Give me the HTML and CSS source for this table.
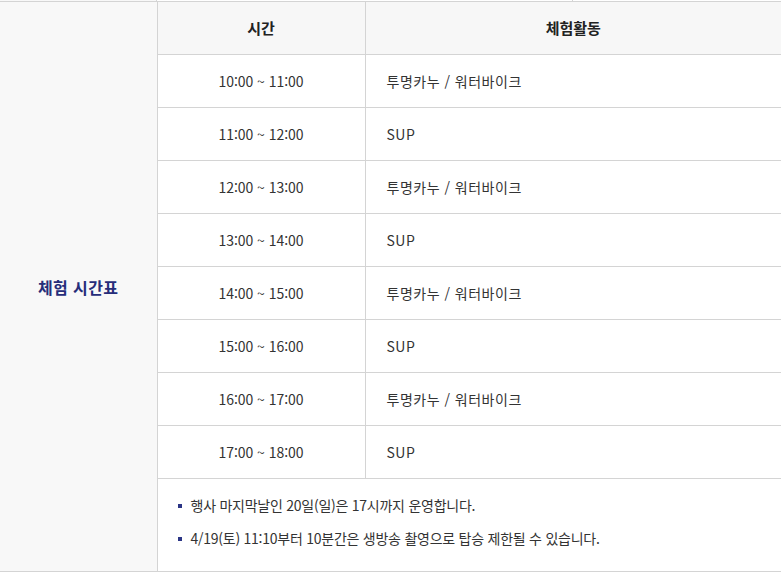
FILE: index.html
```html
<!DOCTYPE html>
<html lang="ko">
<head>
<meta charset="utf-8">
<title>체험 시간표</title>
<link rel="stylesheet" href="styles.css">
</head>
<body>
<div class="prev">
  <div class="prev-a"></div>
  <div class="prev-b"></div>
  <div class="prev-c"></div>
</div>
<table class="schedule">
  <colgroup>
    <col class="c1">
    <col class="c2">
    <col class="c3">
  </colgroup>
  <tbody>
    <tr class="head">
      <th class="label" rowspan="10">체험 시간표</th>
      <th>시간</th>
      <th>체험활동</th>
    </tr>
    <tr><td class="time">10:00 ~ 11:00</td><td class="act">투명카누 / 워터바이크</td></tr>
    <tr><td class="time">11:00 ~ 12:00</td><td class="act">SUP</td></tr>
    <tr><td class="time">12:00 ~ 13:00</td><td class="act">투명카누 / 워터바이크</td></tr>
    <tr><td class="time">13:00 ~ 14:00</td><td class="act">SUP</td></tr>
    <tr><td class="time">14:00 ~ 15:00</td><td class="act">투명카누 / 워터바이크</td></tr>
    <tr><td class="time">15:00 ~ 16:00</td><td class="act">SUP</td></tr>
    <tr><td class="time">16:00 ~ 17:00</td><td class="act">투명카누 / 워터바이크</td></tr>
    <tr><td class="time">17:00 ~ 18:00</td><td class="act">SUP</td></tr>
    <tr class="notes-row">
      <td colspan="2" class="notes">
        <ul>
          <li>행사 마지막날인 20일(일)은 17시까지 운영합니다.</li>
          <li>4/19(토) 11:10부터 10분간은 생방송 촬영으로 탑승 제한될 수 있습니다.</li>
        </ul>
      </td>
    </tr>
  </tbody>
</table>
</body>
</html>
```

FILE: styles.css
```css
html, body {
  margin: 0;
  padding: 0;
  background: #fff;
}
body {
  font-family: "Noto Sans CJK KR", "Noto Sans", sans-serif;
  color: #333;
  font-size: 14px;
  width: 781px;
}
.prev {
  display: flex;
  height: 1px;
}
.prev-a {
  width: 156px;
  background: #f8f8f8;
  border-right: 1px solid #d4d4d4;
}
.prev-b {
  width: 415px;
  background: #fff;
  border-right: 1px solid #d4d4d4;
}
.prev-c {
  flex: 1;
  background: #fff;
}
.schedule {
  width: 781px;
  border-collapse: collapse;
  table-layout: fixed;
  border-top: 1px solid #d4d4d4;
  border-bottom: 1px solid #d4d4d4;
}
.c1 { width: 157px; }
.c2 { width: 208px; }
.c3 { width: 416px; }
.schedule th,
.schedule td {
  padding: 0;
  border: 1px solid #d4d4d4;
  height: 52px;
  line-height: 20px;
}
.schedule tr > :first-child { border-left: none; }
.schedule tr > :last-child { border-right: none; }
.head th {
  background: #f7f7f7;
  font-weight: 700;
  font-size: 15px;
  color: #222;
  text-align: center;
}
.schedule th.label {
  background: #f8f8f8;
  color: #262d7a;
  font-size: 16px;
  font-weight: 700;
  text-align: center;
  letter-spacing: 0.4px;
  border-left: none;
}
.time {
  text-align: center;
  letter-spacing: -0.05px;
}
.act {
  text-align: left;
  padding-left: 21px !important;
  letter-spacing: 0.5px;
}
.schedule td.notes {
  height: 84px;
  padding: 0 0 8px 20px;
  vertical-align: middle;
}
.notes ul {
  list-style: none;
  margin: 0;
  padding: 0;
  display: flex;
  flex-direction: column;
  gap: 13px;
}
.notes li {
  position: relative;
  padding-left: 13px;
  line-height: 20px;
  height: 20px;
  letter-spacing: -0.25px;
  color: #333;
}
.notes li::before {
  content: "";
  position: absolute;
  left: 0;
  top: 9px;
  width: 4px;
  height: 4px;
  background: #2b3585;
}
```
